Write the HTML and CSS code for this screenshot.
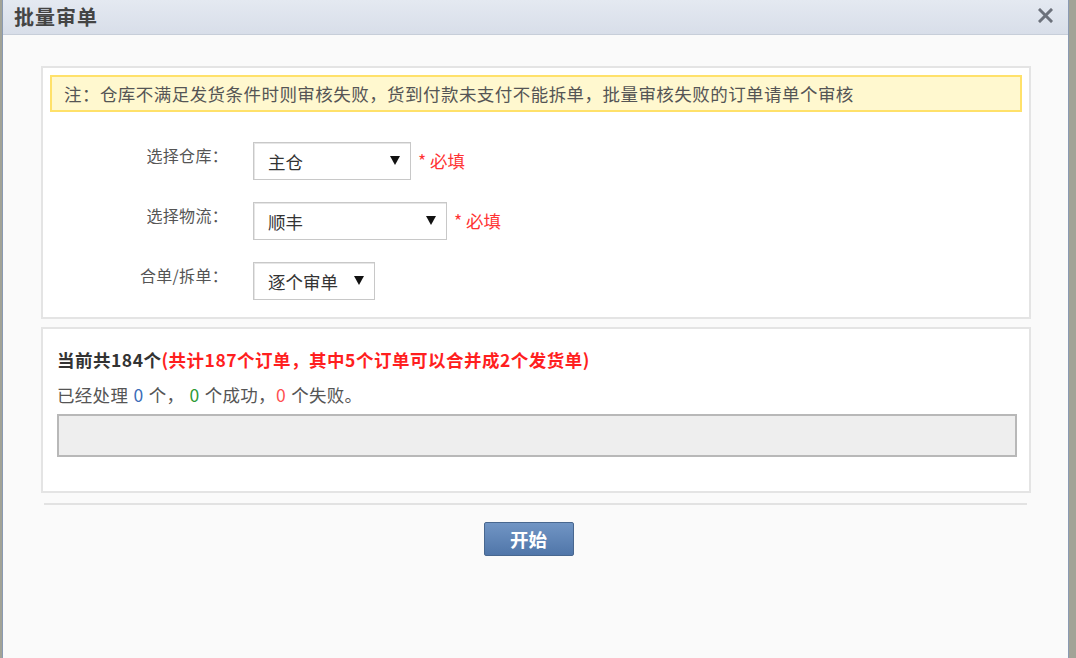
FILE: index.html
```html
<!DOCTYPE html>
<html lang="zh-CN">
<head>
  <meta charset="UTF-8">
  <title>批量审单</title>
  <link rel="stylesheet" href="styles.css">
</head>
<body>
  <div class="dialog">
    <div class="dialog-header">
      <h2 class="dialog-title">批量审单</h2>
      <span class="dialog-close">
        <svg width="15" height="15" viewBox="0 0 15 15"><path d="M2 2 L13 13 M13 2 L2 13" stroke="#6c717b" stroke-width="3" stroke-linecap="square"/></svg>
      </span>
    </div>

    <div class="dialog-body">
      <div class="panel">
        <div class="notice">注：仓库不满足发货条件时则审核失败，货到付款未支付不能拆单，批量审核失败的订单请单个审核</div>

        <div class="form-row first">
          <label class="form-label">选择仓库：</label>
          <div class="select w-158"><span>主仓</span><i class="arrow"></i></div>
          <span class="required">* 必填</span>
        </div>
        <div class="form-row">
          <label class="form-label">选择物流：</label>
          <div class="select w-194"><span>顺丰</span><i class="arrow"></i></div>
          <span class="required">* 必填</span>
        </div>
        <div class="form-row">
          <label class="form-label">合单/拆单：</label>
          <div class="select w-122"><span>逐个审单</span><i class="arrow"></i></div>
        </div>
      </div>

      <div class="panel progress-panel">
        <div class="summary">当前共184个<span class="red">(共计187个订单，其中5个订单可以合并成2个发货单)</span></div>
        <div class="status">已经处理 <span class="num blue">0</span> 个， <span class="num green">0</span> 个成功，<span class="num red">0</span> 个失败。</div>
        <div class="progress-bar"><div class="progress-fill" style="width: 0%"></div></div>
      </div>

      <div class="divider"></div>

      <div class="footer">
        <button class="btn-start">开始</button>
      </div>
    </div>
  </div>
</body>
</html>
```

FILE: styles.css
```css
body {
  margin: 0;
  background: #a2a397;
  font-family: "Noto Sans CJK SC", "Noto Sans", sans-serif;
  color: #333;
}
.dialog {
  margin-left: 2px;
  width: 1065px;
  height: 658px;
  background: #fafafa;
  border-left: 1px solid #8a9ab3;
  border-right: 1px solid #8a9ab3;
  overflow: hidden;
}
.dialog-header {
  height: 34px;
  background: linear-gradient(#e4e9f1, #d8dee9);
  border-bottom: 1px solid #c7ced9;
  display: flex;
  align-items: center;
  justify-content: space-between;
  padding: 0 15px 0 11px;
}
.dialog-title {
  margin: 0;
  font-size: 20px;
  font-weight: bold;
  color: #444;
  letter-spacing: 1px;
  line-height: 34px;
}
.dialog-close {
  display: flex;
  margin-top: -4px;
}
.dialog-body {
  padding: 31px 37px 0 38px;
}
.panel {
  background: #fff;
  border: 2px solid #e4e4e4;
  padding: 7px 7px 17px;
}
.notice {
  height: 33px;
  line-height: 33px;
  background: #fff8cf;
  border: 2px solid #ffe16a;
  padding-left: 12px;
  font-size: 17.5px;
  letter-spacing: 0.45px;
  color: #555;
  white-space: nowrap;
}
.form-row {
  display: flex;
  align-items: flex-start;
  margin-top: 22px;
  margin-left: -7px;
}
.form-row.first {
  margin-top: 30px;
}
.form-label {
  width: 185px;
  margin-right: 25px;
  text-align: right;
  font-size: 16px;
  letter-spacing: 0.3px;
  line-height: 26px;
  color: #555;
}
.select {
  box-sizing: border-box;
  height: 38px;
  border: 1px solid #c8c8c8;
  box-shadow: inset 1px 1px 0 #e6e6e6;
  background: #fff;
  display: flex;
  align-items: center;
  justify-content: space-between;
  padding: 0 10px 0 14px;
  font-size: 17.5px;
  color: #333;
}
.w-158 { width: 158px; }
.w-194 { width: 194px; }
.w-122 { width: 122px; }
.arrow {
  width: 0;
  height: 0;
  border-left: 5px solid transparent;
  border-right: 5px solid transparent;
  border-top: 9px solid #111;
  margin-top: -2px;
}
.required {
  margin-left: 7px;
  font-size: 17.5px;
  line-height: 38px;
  color: #ff3333;
}
.progress-panel {
  margin-top: 8px;
  padding: 19px 12px 34px 14px;
}
.summary {
  font-size: 17.5px;
  font-weight: bold;
  letter-spacing: 0.5px;
  line-height: 24px;
  color: #333;
}
.status {
  margin-top: 11px;
  font-size: 17.5px;
  letter-spacing: 0.3px;
  word-spacing: 1px;
  line-height: 24px;
  color: #555;
}
.red { color: #ff1f1f; }
.num.red { color: #ff5050; }
.blue { color: #3b6db8; }
.green { color: #2e9a35; }
.progress-bar {
  margin-top: 7px;
  height: 39px;
  border: 2px solid #b8b8b8;
  background: #eeeeee;
}
.progress-fill {
  height: 100%;
  background: #6a8fbf;
}
.divider {
  margin: 10px 4px 0 3px;
  height: 2px;
  background: #e2e2e2;
}
.footer {
  margin-top: 17px;
  padding-right: 15px;
  text-align: center;
}
.btn-start {
  width: 90px;
  height: 34px;
  border: 1px solid #48678f;
  border-radius: 2px;
  background: linear-gradient(#7195c4, #5076a9);
  color: #fff;
  font-family: "Noto Sans CJK SC", sans-serif;
  font-size: 18.5px;
  font-weight: bold;
  line-height: 30px;
  cursor: pointer;
  padding: 0;
}
```
